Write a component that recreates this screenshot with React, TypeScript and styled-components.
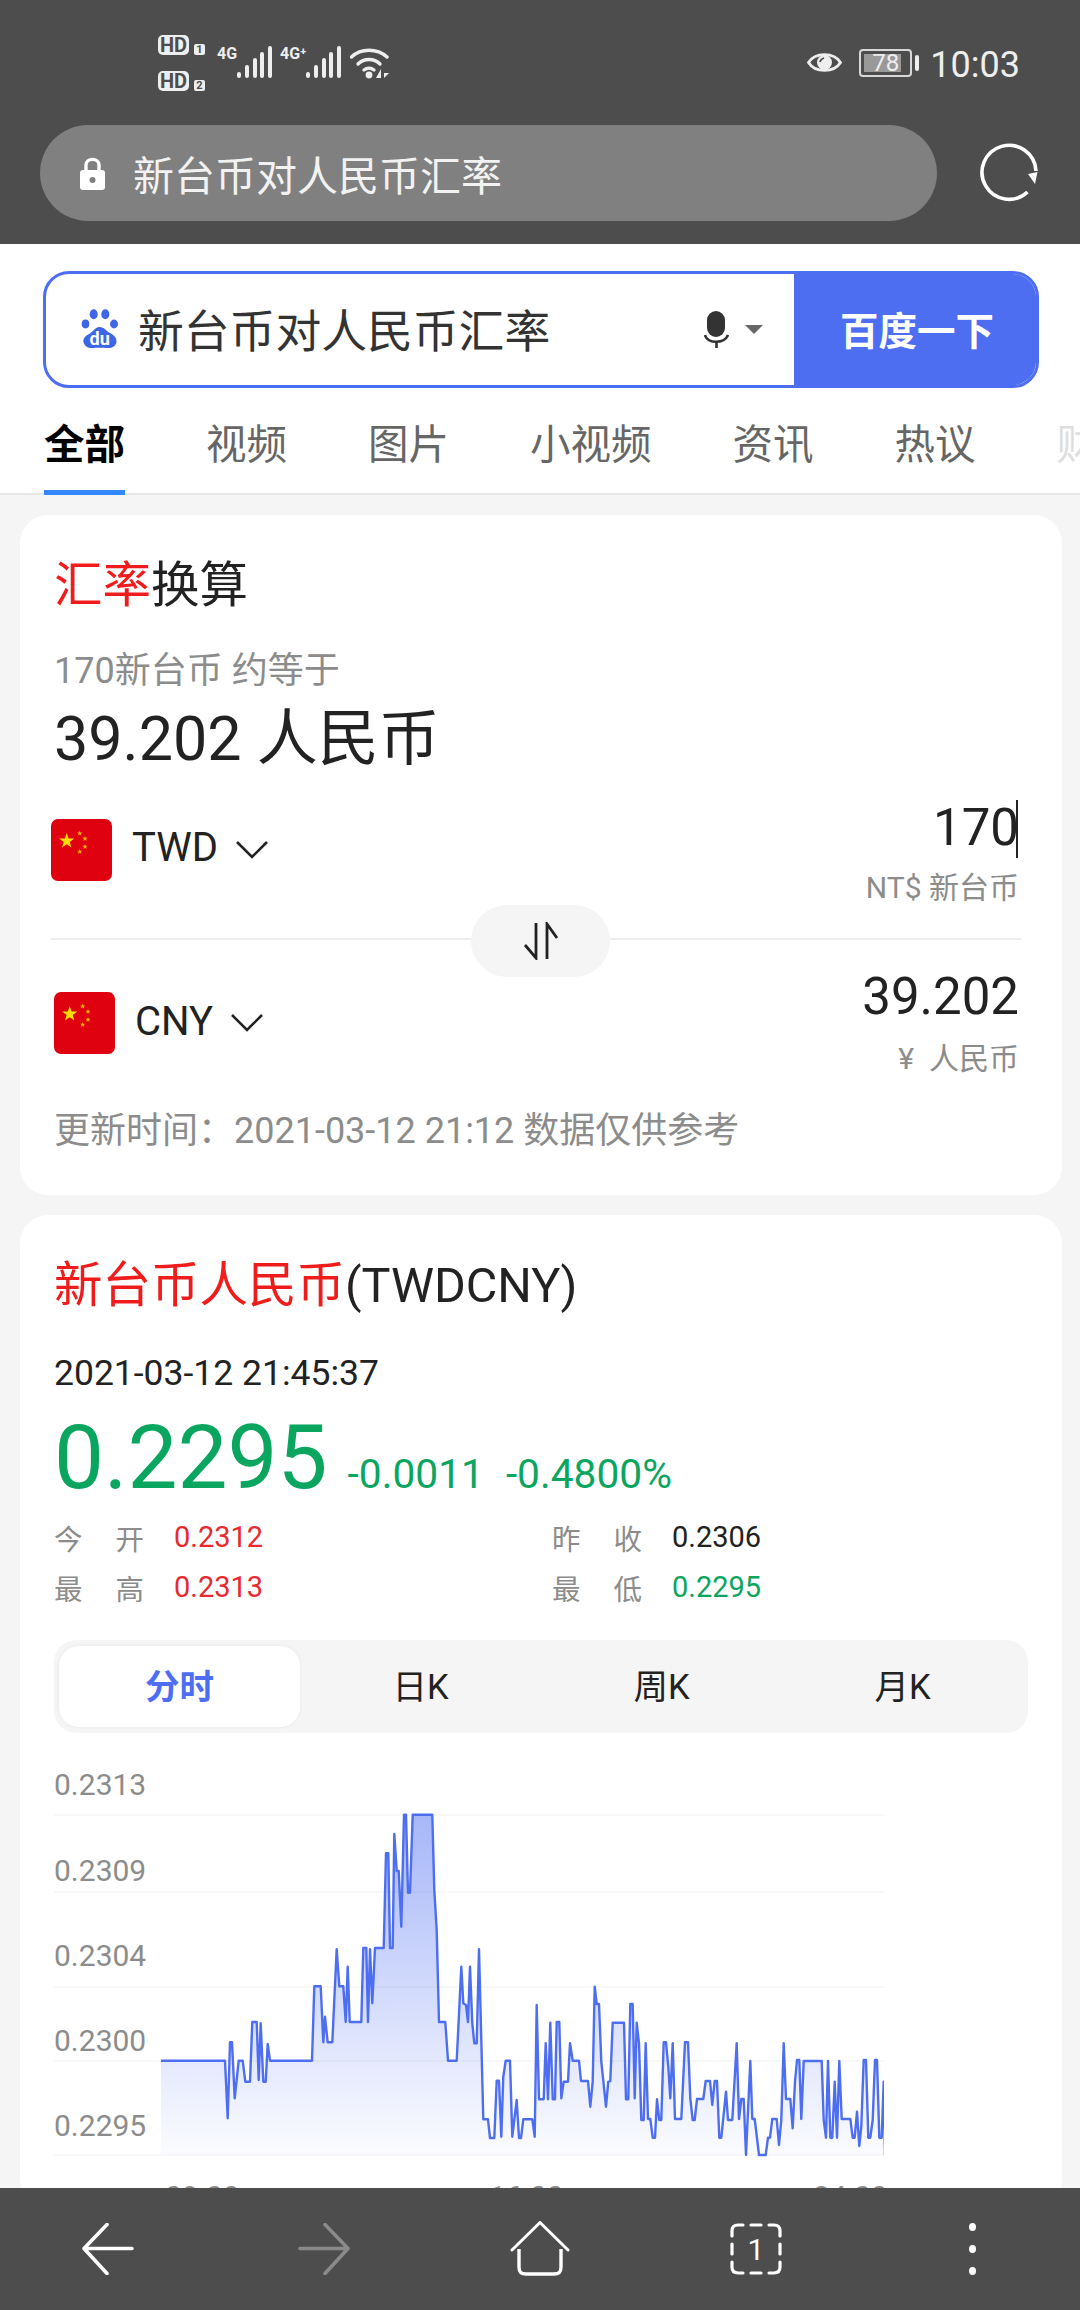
import React from "react";
import styled, { createGlobalStyle } from "styled-components";

const GlobalStyle = createGlobalStyle`
  html, body {
    margin: 0;
    padding: 0;
    background: #f5f5f5;
  }
  * {
    box-sizing: border-box;
  }
  body {
    font-family: Roboto, "Noto Sans CJK SC", sans-serif;
  }
`;

const DARK = "#4d4d4d";
const BLUE = "#4e6ef2";
const RED = "#f01c1c";
const STAT_RED = "#e8292d";
const GREEN = "#0aa65f";
const GRAY = "#8c8c8c";
const INK = "#222222";

const Page = styled.div`
  width: 1080px;
  height: 2310px;
  display: flex;
  flex-direction: column;
  overflow: hidden;
`;

const TopBar = styled.div`
  background: ${DARK};
  height: 244px;
  flex-shrink: 0;
`;

const StatusBar = styled.div`
  height: 125px;
  padding: 0 60px 0 158px;
  display: flex;
  align-items: center;
  color: #eeeeee;
`;

const SimColumn = styled.div`
  width: 59px;
  display: flex;
  flex-direction: column;
  gap: 16px;
`;

const SimRow = styled.div`
  display: flex;
  align-items: flex-end;
  gap: 5px;
`;

const HdBadge = styled.span`
  width: 31px;
  height: 20px;
  border-radius: 5px;
  background: #eeeeee;
  color: ${DARK};
  font-size: 20px;
  line-height: 20px;
  font-weight: 700;
  text-align: center;
`;

const SimNumber = styled.span`
  width: 11px;
  height: 11px;
  border-radius: 2px;
  background: #eeeeee;
  color: ${DARK};
  font-size: 11px;
  line-height: 11px;
  font-weight: 700;
  text-align: center;
`;

const Cell = styled.div<{ $w: number; $left: number }>`
  width: ${(p) => p.$w}px;
  height: 32px;
  margin: -2px 0 0 ${(p) => p.$left}px;
  display: flex;
  justify-content: flex-end;
  align-items: flex-end;
  position: relative;
`;

const CellLabel = styled.span`
  position: absolute;
  left: 0;
  top: 1px;
  font-size: 16px;
  line-height: 14px;
  font-weight: 700;
  white-space: nowrap;
`;

const Bars = styled.div`
  display: flex;
  align-items: flex-end;
  gap: 3.7px;
`;

const Bar = styled.i<{ $h: number }>`
  display: block;
  width: 4px;
  height: ${(p) => p.$h}px;
  border-radius: 2px;
  background: #eeeeee;
`;

const StatusRight = styled.div`
  margin-left: auto;
  display: flex;
  align-items: center;
`;

const Battery = styled.div`
  width: 53px;
  height: 28px;
  margin-left: 17px;
  border: 2px solid #d8d8d8;
  border-radius: 4px;
  position: relative;
  display: flex;
  align-items: center;
  justify-content: center;
  font-size: 24px;
  line-height: 24px;
  color: #eeeeee;
`;

const BatteryFill = styled.div`
  position: absolute;
  left: 3px;
  top: 3px;
  bottom: 3px;
  background: #999999;
`;

const BatteryValue = styled.span`
  position: relative;
`;

const BatteryNub = styled.div`
  width: 4px;
  height: 16px;
  margin: 0 11px 0 3px;
  border-radius: 2px;
  background: #eeeeee;
`;

const Clock = styled.span`
  font-size: 36px;
  line-height: 40px;
  margin-top: 4px;
  color: #eeeeee;
`;

const UrlRow = styled.div`
  display: flex;
  align-items: center;
  padding-left: 40px;
`;

const UrlPill = styled.div`
  width: 897px;
  height: 96px;
  border-radius: 48px;
  background: #808080;
  display: flex;
  align-items: center;
  padding-left: 40px;
  gap: 28px;
  color: #f2f2f2;
  font-size: 41px;
`;

const ReloadSlot = styled.div`
  margin-left: 42px;
  display: flex;
`;

const Header = styled.div`
  background: #ffffff;
  flex-shrink: 0;
  overflow: hidden;
  padding-top: 27px;
`;

const SearchBox = styled.div`
  width: 996px;
  height: 117px;
  margin-left: 43px;
  border: 3px solid ${BLUE};
  border-radius: 26px;
  overflow: hidden;
  display: flex;
  align-items: center;
  padding-left: 34px;
`;

const SearchText = styled.span`
  margin: 0 0 4px 18px;
  font-size: 45.8px;
  color: #333333;
  white-space: nowrap;
`;

const MicGroup = styled.div`
  margin-left: auto;
  display: flex;
  align-items: center;
  gap: 16px;
  padding-right: 31px;
`;

const SearchButton = styled.div`
  width: 242px;
  height: 100%;
  padding: 0 0 4px 4px;
  background: ${BLUE};
  color: #ffffff;
  font-size: 38.5px;
  font-weight: 700;
  display: flex;
  align-items: center;
  justify-content: center;
  flex-shrink: 0;
`;

const TabStrip = styled.div`
  margin-top: 26px;
  height: 81px;
  padding-left: 44px;
  display: flex;
  gap: 81px;
  border-bottom: 2px solid #e6e6e6;
`;

const Tab = styled.div<{ $active?: boolean; $faded?: boolean }>`
  height: 81px;
  padding-top: 3px;
  flex-shrink: 0;
  font-size: 40.5px;
  line-height: 56px;
  white-space: nowrap;
  font-weight: ${(p) => (p.$active ? 700 : 400)};
  color: ${(p) => (p.$active ? "#000000" : p.$faded ? "#dedede" : "#666666")};
  border-bottom: 5px solid ${(p) => (p.$active ? "#3388ff" : "transparent")};
`;

const Content = styled.div`
  flex: 1;
  min-height: 0;
  overflow: hidden;
  padding: 20px 18px 0 20px;
  display: flex;
  flex-direction: column;
  gap: 20px;
`;

const Card = styled.div`
  flex-shrink: 0;
  background: #ffffff;
  border-radius: 28px;
  padding: 0 41px 0 34px;
`;

const ConverterCard = styled(Card)`
  padding-top: 41px;
  padding-bottom: 42px;
`;

const MarketCard = styled(Card)`
  padding-top: 41px;
`;

const CardTitle = styled.div`
  font-size: 48.5px;
  line-height: 60px;
  color: ${INK};
  white-space: nowrap;
`;

const Red = styled.span`
  color: ${RED};
`;

const ResultHint = styled.div`
  margin-top: 33px;
  font-size: 36px;
  line-height: 44px;
  color: ${GRAY};
`;

const ResultValue = styled.div`
  margin-top: 11px;
  font-size: 61px;
  line-height: 70px;
  color: ${INK};
`;

const CurrencyRow = styled.div<{ $top: number; $indent: number }>`
  position: relative;
  margin-top: ${(p) => p.$top}px;
  margin-left: ${(p) => p.$indent}px;
  display: flex;
  align-items: center;
  justify-content: space-between;
  padding-right: 2px;
`;

const CurrencyPicker = styled.div<{ $lift: number }>`
  display: flex;
  align-items: center;
  margin-bottom: ${(p) => p.$lift}px;
`;

const CurrencyCode = styled.span`
  margin: -4px 18px 0 20px;
  font-size: 40px;
  color: ${INK};
`;

const AmountColumn = styled.div<{ $gap: number }>`
  display: flex;
  flex-direction: column;
  align-items: flex-end;
  gap: ${(p) => p.$gap}px;
`;

const Amount = styled.div`
  font-size: 51px;
  line-height: 60px;
  color: ${INK};
  position: relative;
`;

const Caret = styled.i`
  position: absolute;
  right: 1px;
  top: 2px;
  width: 2px;
  height: 58px;
  background: #222222;
`;

const CurrencyUnit = styled.div`
  font-size: 30px;
  line-height: 40px;
  color: ${GRAY};
  white-space: pre;
`;

const SwapRow = styled.div`
  position: relative;
  height: 72px;
  margin: -3px 0 0 -3px;
  display: flex;
  justify-content: center;
  &::before {
    content: "";
    position: absolute;
    left: 0;
    right: 0;
    top: 33px;
    height: 2px;
    background: #eeeeee;
  }
`;

const SwapButton = styled.div`
  position: relative;
  width: 139px;
  height: 72px;
  border-radius: 36px;
  background: #f5f5f5;
  display: flex;
  align-items: center;
  justify-content: center;
  margin-left: 9px;
`;

const UpdatedAt = styled.div`
  margin-top: 30px;
  font-size: 36px;
  line-height: 44px;
  color: ${GRAY};
  white-space: nowrap;
`;

const Timestamp = styled.div`
  margin-top: 35px;
  font-size: 35.5px;
  line-height: 44px;
  color: ${INK};
`;

const PriceRow = styled.div`
  margin-top: 13px;
  height: 100px;
  display: flex;
  align-items: baseline;
  color: ${GREEN};
`;

const Price = styled.span`
  font-size: 89px;
  line-height: 100px;
  margin-right: 20px;
`;

const Delta = styled.span`
  font-size: 40.7px;
  margin-right: 22px;
`;

const StatGrid = styled.div`
  margin-top: 9px;
  display: grid;
  grid-template-columns: 498px 1fr;
  row-gap: 10px;
`;

const Stat = styled.div`
  display: flex;
  align-items: center;
  height: 40px;
  font-size: 29px;
`;

const StatLabel = styled.div`
  width: 90px;
  display: flex;
  justify-content: space-between;
  color: ${GRAY};
  font-size: 28.5px;
`;

const StatValue = styled.span<{ $color: string }>`
  margin-left: 30px;
  color: ${(p) => p.$color};
`;

const Periods = styled.div`
  margin-top: 33px;
  width: 974px;
  height: 93px;
  padding: 6px 5px;
  border-radius: 22px;
  background: #f5f5f5;
  display: grid;
  grid-template-columns: repeat(4, 241px);
`;

const Period = styled.div<{ $active?: boolean }>`
  display: flex;
  align-items: center;
  justify-content: center;
  padding-bottom: 5px;
  font-size: 34.5px;
  border-radius: 20px;
  color: ${(p) => (p.$active ? BLUE : INK)};
  font-weight: ${(p) => (p.$active ? 700 : 400)};
  background: ${(p) => (p.$active ? "#ffffff" : "transparent")};
  box-shadow: ${(p) => (p.$active ? "0 0 4px rgba(0, 0, 0, 0.06)" : "none")};
`;

const ChartSvg = styled.svg`
  display: block;
  margin-top: 37px;
  font-family: Roboto, sans-serif;
  font-size: 30px;
`;

const BottomNav = styled.div`
  flex-shrink: 0;
  height: 122px;
  background: ${DARK};
  display: grid;
  grid-template-columns: repeat(5, 216px);
`;

const NavItem = styled.div`
  display: flex;
  align-items: center;
  justify-content: center;
`;

const TabCount = styled.div`
  position: relative;
  width: 52px;
  height: 52px;
  display: flex;
  align-items: center;
  justify-content: center;
  color: #ffffff;
  font-size: 30px;
`;

const TabCountFrame = styled.svg`
  position: absolute;
  inset: 0;
`;

const NavDots = styled.div`
  display: flex;
  flex-direction: column;
  gap: 14px;
`;

const NavDot = styled.i`
  display: block;
  width: 7px;
  height: 8px;
  border-radius: 50%;
  background: #ffffff;
`;

function Wifi() {
  return (
    <svg width="40" height="32" viewBox="0 0 40 32" style={{ marginLeft: 9 }}>
      <g fill="none" stroke="#eeeeee" strokeWidth="3.4" strokeLinecap="round">
        <path d="M1.5 10 C11 1, 27 1, 37 10" />
        <path d="M8 17 C14 11, 24 11, 30 17" />
        <path d="M14 23 C17 20.5, 21 20.5, 24 23" />
      </g>
      <circle cx="19" cy="28" r="3.4" fill="#eeeeee" />
      <path d="M31 22 V31 H26 Z M34 22 V31 L39 26 H34 Z" fill="#eeeeee" />
    </svg>
  );
}

function LockIcon() {
  return (
    <svg width="25" height="34" viewBox="0 0 25 34">
      <path d="M6 15 V9 C6 1.5, 19 1.5, 19 9 V15" fill="none" stroke="#ffffff" strokeWidth="3.4" />
      <rect x="0" y="14" width="25" height="20" rx="3" fill="#ffffff" />
      <circle cx="12.5" cy="24" r="3" fill="#808080" />
    </svg>
  );
}

function BaiduPaw() {
  return (
    <svg width="40" height="41" viewBox="10 10 40 41">
      <g fill="#3f66e6">
        <ellipse cx="15.5" cy="25" rx="3.8" ry="4.4" />
        <ellipse cx="23.7" cy="15.3" rx="4" ry="5" />
        <ellipse cx="35.3" cy="15.3" rx="4" ry="5" />
        <ellipse cx="44" cy="25" rx="4" ry="4.4" />
        <path d="M29.5 28 C25 28, 23 33, 19 35 C14 37.5, 13 41, 13.5 43 C14.5 48, 19 49.5, 23 49 C27 48.5, 32 48.5, 37 49 C42 49.5, 46 47, 46.5 43 C47 39, 44 36, 40 34 C36 32, 34.5 28, 29.5 28 Z" />
      </g>
      <text x="29.7" y="45.5" textAnchor="middle" fill="#ffffff" fontSize="18" fontWeight="700" fontFamily="Roboto, sans-serif">
        du
      </text>
    </svg>
  );
}

function MicIcon() {
  return (
    <svg width="25" height="37" viewBox="0 0 25 37">
      <rect x="3" y="0" width="18" height="26" rx="9" fill="#333333" />
      <path d="M1 24 C3 33, 21 33, 24 24" fill="none" stroke="#333333" strokeWidth="2.6" />
      <path d="M12.5 30 V37" stroke="#333333" strokeWidth="2.6" />
    </svg>
  );
}

function starPoints(cx: number, cy: number, r: number) {
  const pts: string[] = [];
  for (let i = 0; i < 10; i++) {
    const rad = i % 2 === 0 ? r : r * 0.4;
    const a = -Math.PI / 2 + (i * Math.PI) / 5;
    pts.push(`${cx + rad * Math.cos(a)},${cy + rad * Math.sin(a)}`);
  }
  return pts.join(" ");
}

function ChinaFlag() {
  return (
    <svg width="61" height="62" viewBox="0 0 61 62">
      <rect width="61" height="62" rx="7" fill="#df0010" />
      <polygon points={starPoints(15.7, 22, 8)} fill="#ffde00" />
      <polygon points={starPoints(28.7, 14.3, 2.8)} fill="#f7b500" />
      <polygon points={starPoints(34, 19.7, 2.8)} fill="#f7b500" />
      <polygon points={starPoints(34, 27.7, 2.8)} fill="#f7b500" />
      <polygon points={starPoints(28.7, 32.7, 2.8)} fill="#f7b500" />
    </svg>
  );
}

function Chevron() {
  return (
    <svg width="32" height="18" viewBox="0 0 32 18">
      <path d="M1 1 L16 16 L31 1" fill="none" stroke="#222222" strokeWidth="2.6" />
    </svg>
  );
}

// traced from the reference, x/y are in 3x crop pixels
const leftTrace = [
  [63, 812], [255, 812], [263, 985], [270, 757], [276, 757], [284, 925], [296, 812], [308, 812], [316, 875], [330, 875],
  [337, 696], [350, 696], [356, 870], [362, 700], [370, 875], [377, 875], [383, 762], [390, 812], [516, 812], [523, 589],
  [542, 589], [550, 757], [555, 680], [563, 757], [577, 757], [590, 478], [598, 589], [610, 589], [617, 696], [623, 530],
  [629, 696], [664, 696], [670, 474], [679, 474], [684, 696], [690, 478], [697, 640], [705, 474], [731, 474], [738, 190],
  [745, 190], [750, 474], [758, 474], [763, 132], [770, 243], [776, 243], [784, 410], [792, 74], [798, 74], [804, 308],
  [810, 308], [818, 74], [877, 74], [883, 300], [890, 420], [897, 696], [916, 696], [924, 812], [950, 812], [964, 530],
  [970, 640], [978, 645], [984, 696], [990, 530], [997, 700], [1003, 760], [1010, 760], [1017, 478], [1030, 988], [1044, 988],
  [1050, 1044], [1063, 1044], [1070, 872], [1077, 872], [1084, 1040], [1090, 860], [1097, 812], [1110, 812], [1117, 1040], [1130, 930],
  [1137, 1044], [1143, 1044], [1150, 988], [1177, 988], [1184, 1040], [1190, 645],
];

const rightTrace = [
  [117, 448], [131, 448], [137, 280], [144, 448], [151, 218], [158, 448], [165, 448], [170, 216], [178, 216], [184, 445],
  [191, 395], [204, 395], [210, 280], [218, 332], [237, 332], [243, 393], [264, 393], [271, 470], [278, 395], [284, 110],
  [290, 162], [297, 162], [304, 335], [318, 470], [325, 395], [331, 393], [338, 218], [372, 218], [378, 448], [385, 448],
  [391, 162], [398, 162], [404, 445], [410, 218], [417, 280], [424, 510], [431, 510], [437, 280], [444, 507], [451, 507],
  [458, 563], [465, 563], [471, 448], [478, 510], [484, 510], [491, 277], [498, 277], [505, 350], [511, 445], [518, 280],
  [525, 507], [544, 507], [555, 277], [564, 277], [571, 445], [578, 510], [584, 510], [591, 447], [610, 447], [617, 393],
  [630, 393], [637, 465], [644, 393], [651, 393], [658, 563], [664, 563], [678, 425], [684, 510], [697, 510], [710, 280],
  [717, 507], [724, 447], [731, 447], [738, 615], [751, 333], [757, 507], [764, 507], [777, 615], [797, 615], [804, 563],
  [810, 563], [817, 507], [830, 507], [837, 585], [844, 510], [851, 280], [858, 447], [871, 447], [878, 535], [885, 395],
  [891, 330], [898, 330], [904, 507], [911, 333], [965, 333], [971, 510], [978, 563], [984, 333], [991, 563], [997, 563],
  [1004, 395], [1011, 563], [1018, 333], [1025, 507], [1051, 507], [1058, 563], [1064, 563], [1071, 485], [1078, 588], [1084, 530],
  [1091, 330], [1098, 330], [1105, 563], [1111, 563], [1118, 510], [1125, 330], [1131, 330], [1138, 563], [1145, 563], [1151, 395],
  [1155, 615],
];

const chartPoints = [
  ...leftTrace.map(([x, y]) => [140 + x / 3, 1790 + y / 3]),
  ...rightTrace.map(([x, y]) => [500 + x / 3, 1950 + y / 3]),
];

const linePath = chartPoints.map(([x, y], i) => `${i === 0 ? "M" : "L"}${x.toFixed(1)} ${y.toFixed(1)}`).join(" ");
const areaPath = `${linePath} L885 2155 L161 2155 Z`;

const gridLines = [1815, 1892, 1987, 2061, 2155];
const priceAxis = [
  { label: "0.2313", y: 1795 },
  { label: "0.2309", y: 1881 },
  { label: "0.2304", y: 1966 },
  { label: "0.2300", y: 2051 },
  { label: "0.2295", y: 2136 },
];
const timeAxis = [
  { label: "09:00", x: 165 },
  { label: "16:00", x: 489 },
  { label: "24:00", x: 813 },
];

function PriceChart() {
  return (
    <ChartSvg width="830" height="437" viewBox="54 1770 830 437">
      <defs>
        <linearGradient id="chartFill" gradientUnits="userSpaceOnUse" x1="0" y1="1815" x2="0" y2="2155">
          <stop offset="0" stopColor={BLUE} stopOpacity="0.5" />
          <stop offset="1" stopColor={BLUE} stopOpacity="0.02" />
        </linearGradient>
      </defs>
      {gridLines.map((y) => (
        <line key={y} x1="54" x2="884" y1={y} y2={y} stroke="#f6f6f6" strokeWidth="1.5" />
      ))}
      <path d={areaPath} fill="url(#chartFill)" />
      <path d={linePath} fill="none" stroke={BLUE} strokeWidth="2.4" strokeLinejoin="round" />
      {priceAxis.map((t) => (
        <text key={t.label} x="54" y={t.y} fill={GRAY}>
          {t.label}
        </text>
      ))}
      {timeAxis.map((t) => (
        <text key={t.label} x={t.x} y="2207" fill={GRAY}>
          {t.label}
        </text>
      ))}
    </ChartSvg>
  );
}

const stats = [
  { a: "今", b: "开", value: "0.2312", color: STAT_RED },
  { a: "昨", b: "收", value: "0.2306", color: INK },
  { a: "最", b: "高", value: "0.2313", color: STAT_RED },
  { a: "最", b: "低", value: "0.2295", color: GREEN },
];

export default function App() {
  return (
    <Page>
      <GlobalStyle />
      <TopBar>
        <StatusBar>
          <SimColumn>
            <SimRow>
              <HdBadge>HD</HdBadge>
              <SimNumber>1</SimNumber>
            </SimRow>
            <SimRow>
              <HdBadge>HD</HdBadge>
              <SimNumber>2</SimNumber>
            </SimRow>
          </SimColumn>
          <Cell $w={55} $left={0}>
            <CellLabel>4G</CellLabel>
            <Bars>
              {[6, 13, 20, 26, 32].map((h) => (
                <Bar key={h} $h={h} />
              ))}
            </Bars>
          </Cell>
          <Cell $w={61} $left={8}>
            <CellLabel>4G⁺</CellLabel>
            <Bars>
              {[6, 13, 20, 26, 32].map((h) => (
                <Bar key={h} $h={h} />
              ))}
            </Bars>
          </Cell>
          <Wifi />
          <StatusRight>
            <svg width="35" height="27" viewBox="0 0 35 27">
              <path d="M1.5 13.5 C8 3, 27 3, 33.5 13.5 C27 24, 8 24, 1.5 13.5 Z" fill="none" stroke="#eeeeee" strokeWidth="2.8" />
              <circle cx="17.5" cy="13.5" r="7.5" fill="#eeeeee" />
              <path d="M13 13 C13.5 10.5, 15 9.5, 17 9" fill="none" stroke="#4d4d4d" strokeWidth="1.8" />
            </svg>
            <Battery>
              <BatteryFill style={{ width: `${78 * 0.47}px` }} />
              <BatteryValue>78</BatteryValue>
            </Battery>
            <BatteryNub />
            <Clock>10:03</Clock>
          </StatusRight>
        </StatusBar>
        <UrlRow>
          <UrlPill>
            <LockIcon />
            <span>新台币对人民币汇率</span>
          </UrlPill>
          <ReloadSlot>
            <svg width="60" height="60" viewBox="0 0 60 60">
              <path d="M48.5 49 A27 27 0 1 1 57 28" fill="none" stroke="#ffffff" strokeWidth="3.6" />
              <polygon points="49,31 58.5,29 56,41" fill="#ffffff" />
            </svg>
          </ReloadSlot>
        </UrlRow>
      </TopBar>

      <Header>
        <SearchBox>
          <BaiduPaw />
          <SearchText>新台币对人民币汇率</SearchText>
          <MicGroup>
            <MicIcon />
            <svg width="18" height="9" viewBox="0 0 18 9">
              <polygon points="0,0 18,0 9,9" fill="#666666" />
            </svg>
          </MicGroup>
          <SearchButton>百度一下</SearchButton>
        </SearchBox>
        <TabStrip>
          <Tab $active>全部</Tab>
          <Tab>视频</Tab>
          <Tab>图片</Tab>
          <Tab>小视频</Tab>
          <Tab>资讯</Tab>
          <Tab>热议</Tab>
          <Tab $faded>财经</Tab>
        </TabStrip>
      </Header>

      <Content>
        <ConverterCard>
          <CardTitle>
            <Red>汇率</Red>换算
          </CardTitle>
          <ResultHint>170新台币 约等于</ResultHint>
          <ResultValue>39.202 人民币</ResultValue>
          <CurrencyRow $top={24} $indent={-3}>
            <CurrencyPicker $lift={7}>
              <ChinaFlag />
              <CurrencyCode>TWD</CurrencyCode>
              <Chevron />
            </CurrencyPicker>
            <AmountColumn $gap={10}>
              <Amount>
                170
                <Caret />
              </Amount>
              <CurrencyUnit>NT$ 新台币</CurrencyUnit>
            </AmountColumn>
          </CurrencyRow>
          <SwapRow>
            <SwapButton>
              <svg width="36" height="38" viewBox="0 0 36 38">
                <g fill="none" stroke="#222222" strokeWidth="2.8">
                  <path d="M13 1 V36 L2 23" />
                  <path d="M24 37 V2 L34 16" />
                </g>
              </svg>
            </SwapButton>
          </SwapRow>
          <CurrencyRow $top={-10} $indent={0}>
            <CurrencyPicker $lift={0}>
              <ChinaFlag />
              <CurrencyCode>CNY</CurrencyCode>
              <Chevron />
            </CurrencyPicker>
            <AmountColumn $gap={12}>
              <Amount>39.202</Amount>
              <CurrencyUnit>¥  人民币</CurrencyUnit>
            </AmountColumn>
          </CurrencyRow>
          <UpdatedAt>更新时间：2021-03-12 21:12 数据仅供参考</UpdatedAt>
        </ConverterCard>

        <MarketCard>
          <CardTitle>
            <Red>新台币人民币</Red>(TWDCNY)
          </CardTitle>
          <Timestamp>2021-03-12 21:45:37</Timestamp>
          <PriceRow>
            <Price>0.2295</Price>
            <Delta>-0.0011</Delta>
            <Delta>-0.4800%</Delta>
          </PriceRow>
          <StatGrid>
            {stats.map((s) => (
              <Stat key={s.value}>
                <StatLabel>
                  <span>{s.a}</span>
                  <span>{s.b}</span>
                </StatLabel>
                <StatValue $color={s.color}>{s.value}</StatValue>
              </Stat>
            ))}
          </StatGrid>
          <Periods>
            <Period $active>分时</Period>
            <Period>日K</Period>
            <Period>周K</Period>
            <Period>月K</Period>
          </Periods>
          <PriceChart />
        </MarketCard>
      </Content>

      <BottomNav>
        <NavItem>
          <svg width="52" height="52" viewBox="0 0 52 52">
            <path d="M25 1.5 L2 25.5 M2 25.5 L50 25.5 M2 25.5 L25 50.5" fill="none" stroke="#ffffff" strokeWidth="3.6" strokeLinecap="round" />
          </svg>
        </NavItem>
        <NavItem>
          <svg width="52" height="52" viewBox="0 0 52 52">
            <path d="M27 1.5 L50 25.5 M50 25.5 L2 25.5 M50 25.5 L27 50.5" fill="none" stroke="#8a8a8a" strokeWidth="3.6" strokeLinecap="round" />
          </svg>
        </NavItem>
        <NavItem>
          <svg width="60" height="56" viewBox="0 0 60 56">
            <path d="M2 29 L30 1.5 L58 29" fill="none" stroke="#ffffff" strokeWidth="3" strokeLinecap="round" strokeLinejoin="round" />
            <path d="M9 28 V46 C9 51, 11 53, 16 53 H44 C49 53, 51 51, 51 46 V28" fill="none" stroke="#ffffff" strokeWidth="3.4" />
          </svg>
        </NavItem>
        <NavItem>
          <TabCount>
            <TabCountFrame width="52" height="52" viewBox="0 0 52 52">
              <path
                d="M2 13 V8 C2 4, 4 2, 8 2 H13 M21 2 H31 M39 2 H44 C48 2, 50 4, 50 8 V13 M50 21 V31 M50 39 V44 C50 48, 48 50, 44 50 H39 M31 50 H21 M13 50 H8 C4 50, 2 48, 2 44 V39 M2 31 V21"
                fill="none"
                stroke="#ffffff"
                strokeWidth="3.2"
                strokeLinecap="round"
              />
            </TabCountFrame>
            1
          </TabCount>
        </NavItem>
        <NavItem>
          <NavDots>
            <NavDot />
            <NavDot />
            <NavDot />
          </NavDots>
        </NavItem>
      </BottomNav>
    </Page>
  );
}
